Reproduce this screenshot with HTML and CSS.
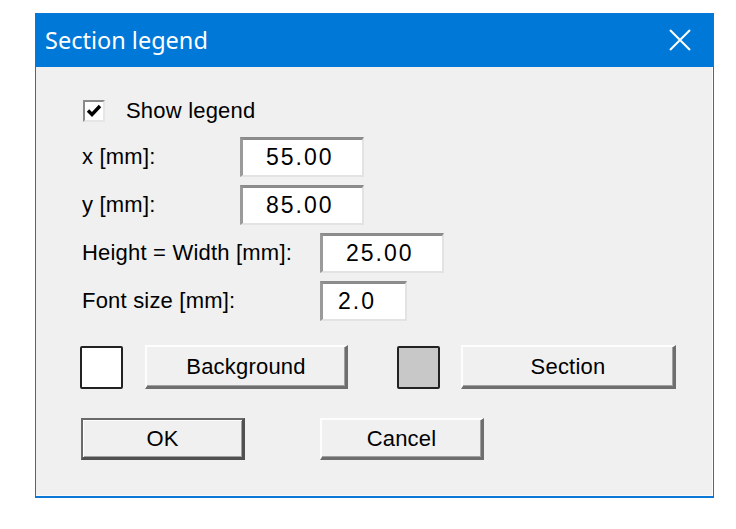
FILE: index.html
```html
<!DOCTYPE html>
<html>
<head>
<meta charset="utf-8">
<link rel="stylesheet" href="styles.css">
</head>
<body>
<div class="dialog">
  <div class="titlebar">
    <span class="title">Section legend</span>
    <svg class="close" width="22" height="22" viewBox="0 0 22 22"><path d="M1 1 L21 21 M21 1 L1 21" stroke="#fff" stroke-width="2" fill="none"/></svg>
  </div>
  <div class="content">
    <div class="check-row">
      <span class="checkbox"><svg width="16" height="14" viewBox="0 0 16 14"><path d="M2 6.5 L6 10.5 L14 2" stroke="#000" stroke-width="3.4" fill="none"/></svg></span>
      <span class="check-label">Show legend</span>
    </div>
    <div class="fields">
      <div class="field"><span class="label short">x [mm]:</span><span class="input wide">55.00</span></div>
      <div class="field"><span class="label short">y [mm]:</span><span class="input wide">85.00</span></div>
      <div class="field"><span class="label long">Height = Width [mm]:</span><span class="input wide">25.00</span></div>
      <div class="field"><span class="label long">Font size [mm]:</span><span class="input narrow">2.0</span></div>
    </div>
    <div class="color-row">
      <span class="swatch white"></span>
      <span class="btn bg-btn">Background</span>
      <span class="swatch grey"></span>
      <span class="btn sec-btn">Section</span>
    </div>
    <div class="action-row">
      <span class="btn action default">OK</span>
      <span class="btn action">Cancel</span>
    </div>
  </div>
</div>
</body>
</html>
```
FILE: styles.css
```css
html, body {
  margin: 0;
  padding: 0;
  background: #ffffff;
}
body {
  font-family: "Liberation Sans", Arial, sans-serif;
  color: #000;
}
.dialog {
  margin: 13px 0 0 35px;
  width: 679px;
  height: 485px;
  box-sizing: border-box;
  background: #0078d7;
  border: 1px solid #0a78d4;
  border-bottom-width: 2px;
  display: flex;
  flex-direction: column;
}
.titlebar {
  height: 53px;
  display: flex;
  align-items: center;
  justify-content: space-between;
  padding: 0 22px 0 9px;
  flex: none;
}
.title {
  font-family: "Noto Sans", "Open Sans", sans-serif;
  font-size: 23.5px;
  color: #fff;
  margin-top: -2px;
}
.close {
  display: block;
  margin-top: -1px;
}
.content {
  flex: 1;
  background: #f0f0f0;
  box-shadow: inset -1px -1px 0 #fbfbfb;
  padding: 33px 0 0 46px;
  font-size: 22px;
  letter-spacing: 0.2px;
}
.check-row {
  display: flex;
  align-items: center;
  height: 22px;
}
.checkbox {
  width: 22px;
  height: 22px;
  box-sizing: border-box;
  background: #fff;
  border-style: solid;
  border-width: 2px;
  border-color: #8a8a8a #e6e6e6 #e6e6e6 #8a8a8a;
  display: flex;
  align-items: center;
  justify-content: center;
  margin-left: 1px;
}
.checkbox svg { display: block; }
.check-label {
  margin-left: 21px;
}
.fields {
  margin-top: 15px;
  display: flex;
  flex-direction: column;
  gap: 8px;
}
.field {
  display: flex;
  align-items: center;
  height: 40px;
}
.label.short { width: 158px; }
.label.long { width: 238px; }
.input {
  height: 40px;
  box-sizing: border-box;
  background: #fff;
  border-style: solid;
  border-width: 3px 2px 2px 3px;
  border-color: #8c8c8c #e3e3e3 #e3e3e3 #9a9a9a;
  display: flex;
  align-items: center;
  font-size: 23px;
  letter-spacing: 2px;
}
.input.wide { width: 124px; padding-left: 23px; }
.input.narrow { width: 87px; padding-left: 15px; }
.color-row {
  margin-top: 24px;
  margin-left: -2px;
  display: flex;
  align-items: center;
  height: 44px;
}
.swatch {
  width: 43px;
  height: 43px;
  box-sizing: border-box;
  border: 2px solid #222;
  border-radius: 2px;
}
.swatch.white { background: #fff; }
.swatch.grey { background: #c8c8c8; margin-left: 49px; }
.btn {
  height: 44px;
  box-sizing: border-box;
  background: #f0f0f0;
  border-style: solid;
  border-width: 2px 3px 3px 2px;
  border-color: #fdfdfd #6e6e6e #6e6e6e #fdfdfd;
  box-shadow: inset -1px -1px 0 #a0a0a0;
  display: flex;
  align-items: center;
  justify-content: center;
}
.bg-btn { width: 203px; margin-left: 22px; }
.sec-btn { width: 215px; margin-left: 21px; }
.action-row {
  margin-top: 29px;
  margin-left: -1px;
  display: flex;
  gap: 75px;
}
.btn.action {
  width: 164px;
  height: 42px;
}
.btn.default {
  border-color: #6a6a6a #505050 #505050 #6a6a6a;
  box-shadow: inset 1px 1px 0 #fdfdfd, inset -1px -1px 0 #a0a0a0;
}
```
